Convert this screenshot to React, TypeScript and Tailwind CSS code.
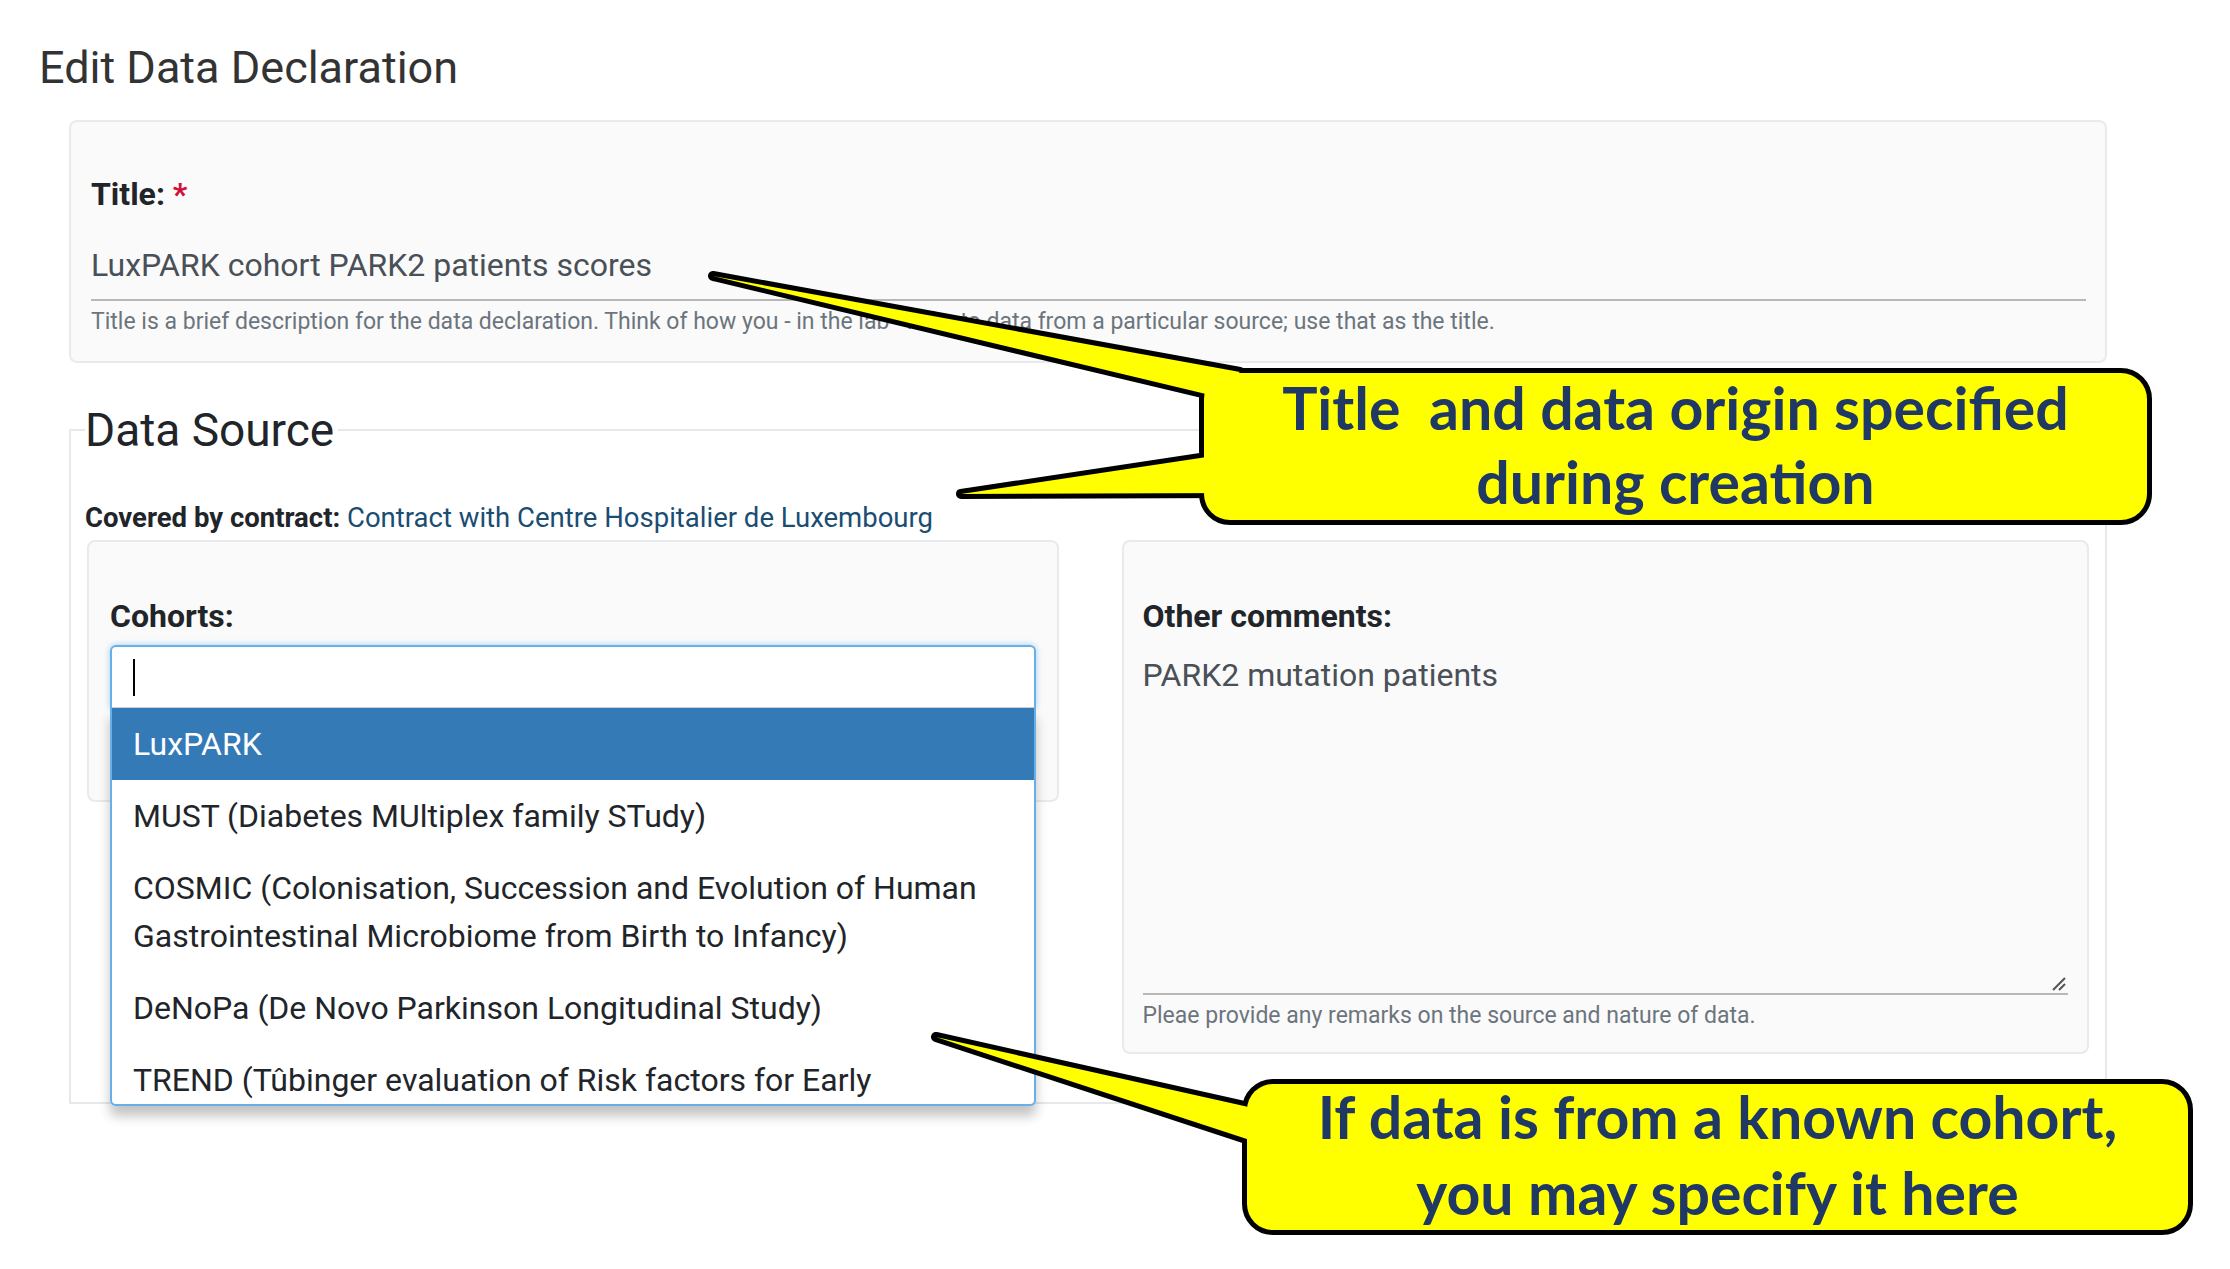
const cohorts = [
  "LuxPARK",
  "MUST (Diabetes MUltiplex family STudy)",
  "COSMIC (Colonisation, Succession and Evolution of Human Gastrointestinal Microbiome from Birth to Infancy)",
  "DeNoPa (De Novo Parkinson Longitudinal Study)",
  "TREND (Tûbinger evaluation of Risk factors for Early Detection of Neurodegeneration)",
];

function CohortSelect() {
  return (
    <div className="relative mt-[12px]">
      <div className="relative h-[63px] rounded-t-[6px] border-2 border-b-0 border-[#66afe9] bg-white shadow-[0_0_6px_rgba(102,175,233,0.6)]">
        <div className="absolute left-[21px] top-[12px] h-[37px] w-[2px] bg-black" />
        <div className="absolute bottom-0 left-0 right-0 h-px bg-[#d0d0d0]" />
      </div>
      {/* open menu */}
      <div className="absolute left-0 right-0 top-full z-10 h-[398px] overflow-hidden rounded-b-[6px] border-2 border-t-0 border-[#66afe9] bg-white shadow-[0_10px_12px_rgba(0,0,0,0.24)]">
        {cohorts.map((c, i) => (
          <div
            key={c}
            className={
              i === 0
                ? "bg-[#337ab7] px-[21px] py-[12px] text-[32px] leading-[48px] text-white"
                : "px-[21px] py-[12px] text-[32px] leading-[48px] text-[#212529]"
            }
          >
            {c}
          </div>
        ))}
      </div>
    </div>
  );
}

function Callouts() {
  const boxes = (
    <>
      <rect x="1204" y="373" width="943" height="147" rx="26" />
      <rect x="1247" y="1084" width="941" height="146" rx="26" />
      <polygon points="713,276 1240,372 1206,394" />
      <polygon points="961,494 1240,452 1240,493" />
      <polygon points="936,1037 1280,1114 1280,1150" />
    </>
  );
  return (
    <>
      <svg className="pointer-events-none absolute inset-0 z-20" width="2230" height="1269" viewBox="0 0 2230 1269">
        <g fill="#ffff00" stroke="#000" strokeWidth="10" strokeLinejoin="round">
          {boxes}
        </g>
        <g fill="#ffff00">{boxes}</g>
      </svg>
      <div className="absolute left-[1199px] top-[368px] z-30 flex h-[157px] w-[953px] flex-col items-center pt-[3px] font-['Lato',sans-serif] text-[59px] font-bold leading-[74px] text-[#203864]">
        <div>Title&nbsp; and data origin specified</div>
        <div>during creation</div>
      </div>
      <div className="absolute left-[1242px] top-[1079px] z-30 flex h-[156px] w-[951px] flex-col items-center font-['Lato',sans-serif] text-[59px] font-bold leading-[76px] text-[#203864]">
        <div>If data is from a known cohort,</div>
        <div>you may specify it here</div>
      </div>
    </>
  );
}

export default function App() {
  return (
    <div className="relative h-[1269px] w-[2230px] overflow-hidden bg-white font-['Roboto',sans-serif] text-[#212529]">
      <h1 className="pl-[39px] pt-[40px] text-[45px] font-normal leading-[56px] text-[#333]">Edit Data Declaration</h1>

      <div className="ml-[69px] mt-[24px] w-[2038px] rounded-[8px] border-2 border-[#e8eaed] bg-[#fafafa] pb-[26px] pl-[20px] pr-[19px] pt-[55px]">
        <div className="text-[32px] font-bold leading-[34px]">
          Title: <span className="text-[#d0103a]">*</span>
        </div>
        <div className="mt-[35px] border-b-2 border-[#b8b8b8] pb-[15px] text-[32px] leading-[38px] text-[#495057]">
          LuxPARK cohort PARK2 patients scores
        </div>
        <div className="mt-[8px] text-[23px] leading-[26px] text-[#6c757d]">
          Title is a brief description for the data declaration. Think of how you - in the lab - refer to data from a particular source; use that as the title.
        </div>
      </div>

      <fieldset className="ml-[69px] mt-[42px] w-[2038px] border-2 border-[#e6e8eb] pb-[48px] pl-[14px] pr-[16px]">
        <legend className="pr-[4px] text-[46px] leading-[50px]">Data Source</legend>
        <div className="mt-[46px] text-[27.5px] leading-[34px]">
          <span className="font-bold">Covered by contract:</span>{" "}
          <span className="text-[#1a4d73]">Contract with Centre Hospitalier de Luxembourg</span>
        </div>
        <div className="ml-[2px] mt-[5px] flex items-start gap-[63px]">
          <div className="h-[262px] flex-1 rounded-[8px] border-2 border-[#e8eaed] bg-[#fafafa] px-[21px] pt-[57px]">
            <div className="text-[32px] font-bold leading-[34px]">Cohorts:</div>
            <CohortSelect />
          </div>
          <div className="flex-1 rounded-[8px] border-2 border-[#e8eaed] bg-[#fafafa] pb-[23px] pl-[19px] pr-[19px] pt-[57px]">
            <div className="text-[32px] font-bold leading-[34px]">Other comments:</div>
            <div className="relative mt-[24px] h-[338px] border-b-2 border-[#b8b8b8] text-[32px] leading-[36px] text-[#495057]">
              PARK2 mutation patients
              <svg className="absolute bottom-[2px] right-[2px]" width="16" height="16" viewBox="0 0 16 16">
                <path d="M15 3 L3 15 M15 9 L9 15" stroke="#555" strokeWidth="2" />
              </svg>
            </div>
            <div className="mt-[8px] text-[23px] leading-[26px] text-[#6c757d]">
              Pleae provide any remarks on the source and nature of data.
            </div>
          </div>
        </div>
      </fieldset>

      <Callouts />
    </div>
  );
}
